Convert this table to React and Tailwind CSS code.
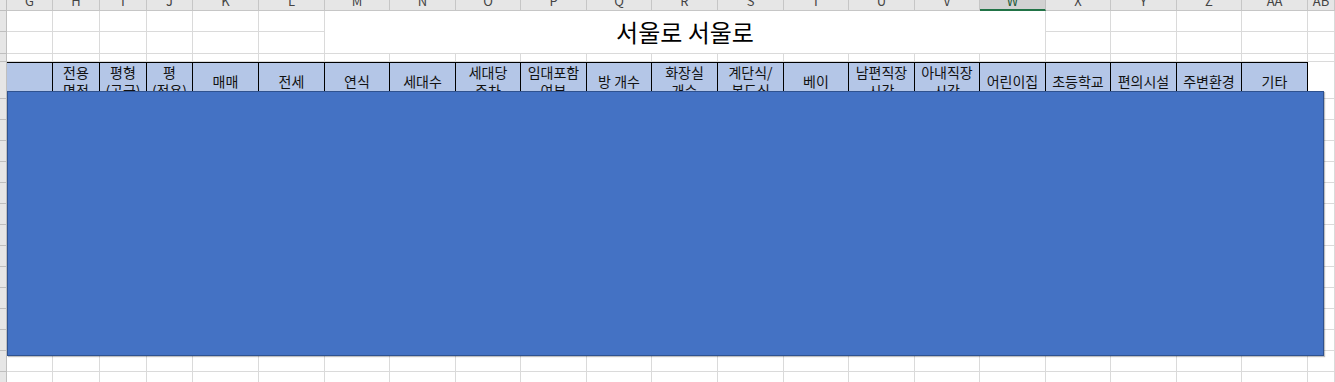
import React from "react";

const LETTERS = ["G","H","I","J","K","L","M","N","O","P","Q","R","S","T","U","V","W","X","Y","Z","AA","AB"];

// header row labels (G .. AA), "\n" = wrapped text in the cell
const LABELS = [
  "",
  "전용\n면적",
  "평형\n(공급)",
  "평\n(전용)",
  "매매",
  "전세",
  "연식",
  "세대수",
  "세대당\n주차",
  "임대포함\n여부",
  "방 개수",
  "화장실\n개수",
  "계단식/\n복도식",
  "베이",
  "남편직장\n시간",
  "아내직장\n시간",
  "어린이집",
  "초등학교",
  "편의시설",
  "주변환경",
  "기타",
];

const font = { fontFamily: '"Noto Sans CJK KR", "Noto Sans", sans-serif' };

function Strip() {
  return <div className="bg-[#e6e6e6] border-r border-b border-[#bfbfbf]" />;
}

function Cell() {
  return <div className="border-r border-b border-[#dadada]" />;
}

function BlankRow({ n }) {
  return (
    <>
      <Strip />
      {LETTERS.map((l) => (
        <Cell key={l + n} />
      ))}
    </>
  );
}

export default function App() {
  const rows = Array.from({ length: 14 }, (_, i) => i);

  return (
    <div className="relative w-[1335px] h-[382px] overflow-hidden bg-white" style={font}>
      <div className="grid grid-cols-[7px_46px_47px_47px_46px_66px_66px_65px_66px_65px_66px_65px_66px_66px_65px_66px_65px_66px_65px_66px_65px_66px_1fr] grid-rows-[11px_21px_22px_8px_37px_repeat(14,21px)]">
        {/* column letters, scrolled so only their lower half shows */}
        <div className="bg-[#e6e6e6] border-r border-b border-[#bfbfbf]" />
        {LETTERS.map((l) =>
          l === "W" ? (
            <div
              key={l}
              className="bg-[#d2d2d2] border-r border-[#bfbfbf] border-b-2 border-b-[#217346] overflow-hidden flex justify-center"
            >
              <span className="text-[13px] leading-[14px] -mt-[6px] text-[#215a36]">{l}</span>
            </div>
          ) : (
            <div
              key={l}
              className="bg-[#e6e6e6] border-r border-b border-[#c6c6c6] overflow-hidden flex justify-center"
            >
              <span className="text-[13px] leading-[14px] -mt-[6px] text-[#444]">{l}</span>
            </div>
          )
        )}

        {/* rows 1-2 with merged title */}
        <Strip />
        {LETTERS.slice(0, 6).map((l) => (
          <Cell key={"a" + l} />
        ))}
        <div className="col-span-11 row-span-2 border-r border-b border-[#dadada] flex items-center justify-center">
          <span className="text-[24px] leading-none text-black">서울로 서울로</span>
        </div>
        {LETTERS.slice(17).map((l) => (
          <Cell key={"b" + l} />
        ))}
        <Strip />
        {LETTERS.slice(0, 6).map((l) => (
          <Cell key={"c" + l} />
        ))}
        {LETTERS.slice(17).map((l) => (
          <Cell key={"d" + l} />
        ))}

        {/* short row 3 */}
        <BlankRow n="r3" />

        {/* table header row */}
        <Strip />
        {LABELS.map((t, i) => (
          <div
            key={"h" + i}
            className="bg-[#b4c6e7] border-t border-r border-b border-black flex items-center justify-center overflow-hidden"
          >
            <span className="whitespace-pre text-center text-[14px] leading-[18px] text-[#111]">{t}</span>
          </div>
        ))}
        <Cell />

        {rows.map((r) => (
          <BlankRow key={r} n={r} />
        ))}
      </div>

      {/* blue rectangle shape lying over the cells */}
      <div className="absolute left-[7px] top-[91px] w-[1317px] h-[265px] bg-[#4472c4] border border-[#2f528f] shadow-[1px_1px_1px_rgba(0,0,0,0.25)]" />
    </div>
  );
}
